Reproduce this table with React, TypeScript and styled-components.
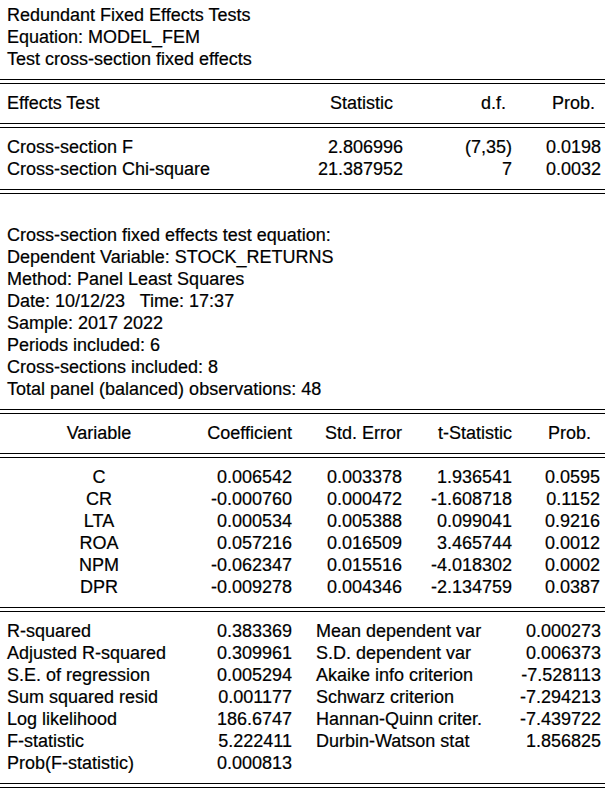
import React from "react";
import styled, { createGlobalStyle } from "styled-components";

const rowHeight = "22px";

const GlobalStyle = createGlobalStyle`
  html, body {
    margin: 0;
    padding: 0;
    background: #ffffff;
  }
  body {
    font-family: "Liberation Sans", Arial, sans-serif;
    font-size: 18px;
    color: #000000;
    -webkit-text-stroke: 0.2px #000;
  }
`;

const Sheet = styled.div`
  width: 605px;
  padding-top: 4px;
  display: flex;
  flex-direction: column;
`;

const Line = styled.div`
  height: ${rowHeight};
  line-height: ${rowHeight};
  padding-left: 7px;
  white-space: pre;
`;

const Blank = styled.div`
  height: ${rowHeight};
`;

// eviews style double rule
const Rule = styled.div`
  height: ${rowHeight};
  display: flex;
  flex-direction: column;
  justify-content: center;
`;
const RuleInner = styled.div`
  height: 3px;
  border-top: 1px solid #000;
  border-bottom: 1px solid #000;
`;

const Grid = styled.div<{ $cols: string }>`
  display: grid;
  grid-template-columns: ${(p) => p.$cols};
  grid-auto-rows: ${rowHeight};
  line-height: ${rowHeight};
`;

const Cell = styled.div<{ $align?: "left" | "right" | "center"; $pl?: number; $pr?: number }>`
  text-align: ${(p) => p.$align || "right"};
  padding-left: ${(p) => p.$pl || 0}px;
  padding-right: ${(p) => p.$pr || 0}px;
  white-space: nowrap;
`;

const DoubleRule = () => (
  <Rule>
    <RuleInner />
  </Rule>
);

const testCols = "313px 90px 109px 89px";
const coefCols = "198px 94px 110px 110px 88px";
const statCols = "210px 82px 220px 89px";

const tests = [
  ["Cross-section F", "2.806996", "(7,35)", "0.0198"],
  ["Cross-section Chi-square", "21.387952", "7", "0.0032"],
];

const info = [
  "Cross-section fixed effects test equation:",
  "Dependent Variable: STOCK_RETURNS",
  "Method: Panel Least Squares",
  "Date: 10/12/23   Time: 17:37",
  "Sample: 2017 2022",
  "Periods included: 6",
  "Cross-sections included: 8",
  "Total panel (balanced) observations: 48",
];

const coefs = [
  ["C", "0.006542", "0.003378", "1.936541", "0.0595"],
  ["CR", "-0.000760", "0.000472", "-1.608718", "0.1152"],
  ["LTA", "0.000534", "0.005388", "0.099041", "0.9216"],
  ["ROA", "0.057216", "0.016509", "3.465744", "0.0012"],
  ["NPM", "-0.062347", "0.015516", "-4.018302", "0.0002"],
  ["DPR", "-0.009278", "0.004346", "-2.134759", "0.0387"],
];

const stats = [
  ["R-squared", "0.383369", "Mean dependent var", "0.000273"],
  ["Adjusted R-squared", "0.309961", "S.D. dependent var", "0.006373"],
  ["S.E. of regression", "0.005294", "Akaike info criterion", "-7.528113"],
  ["Sum squared resid", "0.001177", "Schwarz criterion", "-7.294213"],
  ["Log likelihood", "186.6747", "Hannan-Quinn criter.", "-7.439722"],
  ["F-statistic", "5.222411", "Durbin-Watson stat", "1.856825"],
  ["Prob(F-statistic)", "0.000813", "", ""],
];

export default function App() {
  return (
    <>
      <GlobalStyle />
      <Sheet>
        <Line>Redundant Fixed Effects Tests</Line>
        <Line>Equation: MODEL_FEM</Line>
        <Line>Test cross-section fixed effects</Line>
        <DoubleRule />
        <Grid $cols={testCols}>
          <Cell $align="left" $pl={7}>Effects Test</Cell>
          <Cell $pr={10}>Statistic</Cell>
          <Cell $pr={6}>d.f.</Cell>
          <Cell $pr={6}>Prob.</Cell>
        </Grid>
        <DoubleRule />
        <Grid $cols={testCols}>
          {tests.map((r) => (
            <React.Fragment key={r[0]}>
              <Cell $align="left" $pl={7}>{r[0]}</Cell>
              <Cell>{r[1]}</Cell>
              <Cell>{r[2]}</Cell>
              <Cell>{r[3]}</Cell>
            </React.Fragment>
          ))}
        </Grid>
        <DoubleRule />
        <Blank />
        {info.map((t) => (
          <Line key={t}>{t}</Line>
        ))}
        <DoubleRule />
        <Grid $cols={coefCols}>
          <Cell $align="center">Variable</Cell>
          <Cell>Coefficient</Cell>
          <Cell>Std. Error</Cell>
          <Cell>t-Statistic</Cell>
          <Cell $pr={9}>Prob.</Cell>
        </Grid>
        <DoubleRule />
        <Grid $cols={coefCols}>
          {coefs.map((r) => (
            <React.Fragment key={r[0]}>
              <Cell $align="center">{r[0]}</Cell>
              <Cell>{r[1]}</Cell>
              <Cell>{r[2]}</Cell>
              <Cell>{r[3]}</Cell>
              <Cell>{r[4]}</Cell>
            </React.Fragment>
          ))}
        </Grid>
        <DoubleRule />
        <Grid $cols={statCols}>
          {stats.map((r) => (
            <React.Fragment key={r[0]}>
              <Cell $align="left" $pl={7}>{r[0]}</Cell>
              <Cell>{r[1]}</Cell>
              <Cell $align="left" $pl={24}>{r[2]}</Cell>
              <Cell>{r[3]}</Cell>
            </React.Fragment>
          ))}
        </Grid>
        <DoubleRule />
      </Sheet>
    </>
  );
}
